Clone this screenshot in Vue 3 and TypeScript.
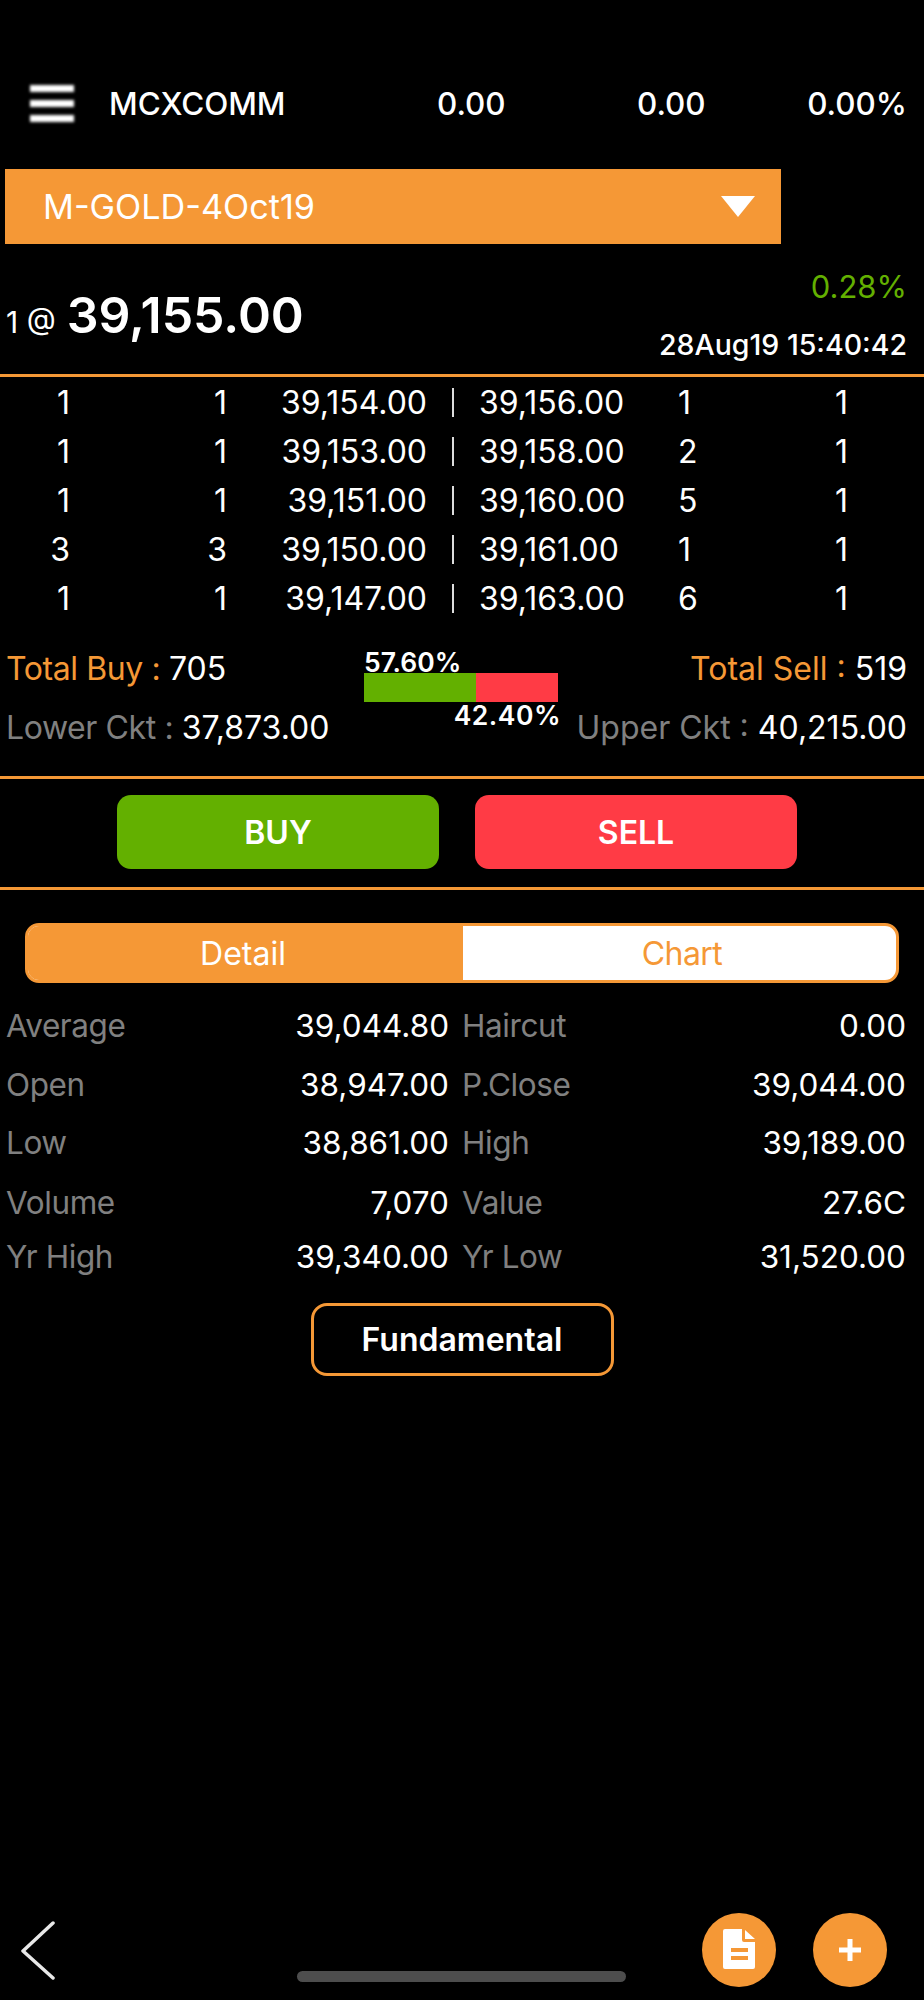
<script setup lang="ts">
type DepthRow = {
  buyOrders: string
  buyQty: string
  bid: string
  ask: string
  sellQty: string
  sellOrders: string
}

type DetailRow = {
  leftLabel: string
  leftValue: string
  rightLabel: string
  rightValue: string
}

const depthRows: DepthRow[] = [
  { buyOrders: '1', buyQty: '1', bid: '39,154.00', ask: '39,156.00', sellQty: '1', sellOrders: '1' },
  { buyOrders: '1', buyQty: '1', bid: '39,153.00', ask: '39,158.00', sellQty: '2', sellOrders: '1' },
  { buyOrders: '1', buyQty: '1', bid: '39,151.00', ask: '39,160.00', sellQty: '5', sellOrders: '1' },
  { buyOrders: '3', buyQty: '3', bid: '39,150.00', ask: '39,161.00', sellQty: '1', sellOrders: '1' },
  { buyOrders: '1', buyQty: '1', bid: '39,147.00', ask: '39,163.00', sellQty: '6', sellOrders: '1' },
]

const detailRows: DetailRow[] = [
  { leftLabel: 'Average', leftValue: '39,044.80', rightLabel: 'Haircut', rightValue: '0.00' },
  { leftLabel: 'Open', leftValue: '38,947.00', rightLabel: 'P.Close', rightValue: '39,044.00' },
  { leftLabel: 'Low', leftValue: '38,861.00', rightLabel: 'High', rightValue: '39,189.00' },
  { leftLabel: 'Volume', leftValue: '7,070', rightLabel: 'Value', rightValue: '27.6C' },
  { leftLabel: 'Yr High', leftValue: '39,340.00', rightLabel: 'Yr Low', rightValue: '31,520.00' },
]

const buyShare = 57.6
</script>

<template>
  <div class="screen">
    <header class="topbar">
      <div class="menu-icon"><span></span><span></span><span></span></div>
      <span class="topbar__name">MCXCOMM</span>
      <span class="topbar__change">0.00</span>
      <span class="topbar__net">0.00</span>
      <span class="topbar__pct">0.00%</span>
    </header>

    <div class="select">
      <span>M-GOLD-4Oct19</span>
      <i class="select__arrow"></i>
    </div>

    <section class="quote">
      <div class="quote__last">
        <span class="quote__qty">1 @</span>
        <span class="quote__price">39,155.00</span>
      </div>
      <div class="quote__side">
        <span class="quote__pct">0.28%</span>
        <span class="quote__time">28Aug19 15:40:42</span>
      </div>
    </section>

    <section class="depth">
      <div v-for="(row, i) in depthRows" :key="i" class="depth__row">
        <span class="depth__orders">{{ row.buyOrders }}</span>
        <span class="depth__qty">{{ row.buyQty }}</span>
        <span class="depth__bid">{{ row.bid }}</span>
        <span class="depth__sep"></span>
        <span class="depth__ask">{{ row.ask }}</span>
        <span class="depth__sell-qty">{{ row.sellQty }}</span>
        <span class="depth__sell-orders">{{ row.sellOrders }}</span>
      </div>
    </section>

    <section class="totals">
      <div class="totals__col">
        <div class="totals__line"><span class="orange tight">Total Buy : </span>705</div>
        <div class="totals__line totals__line--ckt"><span class="grey tight">Lower Ckt : </span>37,873.00</div>
      </div>
      <div class="ratio">
        <span class="ratio__buy">57.60%</span>
        <div class="ratio__bar">
          <div class="ratio__fill" :style="{ width: buyShare + '%' }"></div>
        </div>
        <span class="ratio__sell">42.40%</span>
      </div>
      <div class="totals__col totals__col--right">
        <div class="totals__line"><span class="orange">Total Sell : </span>519</div>
        <div class="totals__line totals__line--ckt"><span class="grey">Upper Ckt : </span>40,215.00</div>
      </div>
    </section>

    <section class="actions">
      <button type="button" class="actions__btn actions__btn--buy">BUY</button>
      <button type="button" class="actions__btn actions__btn--sell">SELL</button>
    </section>

    <div class="tabs">
      <div class="tabs__item tabs__item--active">Detail</div>
      <div class="tabs__item tabs__item--chart">Chart</div>
    </div>

    <section class="details">
      <div v-for="row in detailRows" :key="row.leftLabel" class="details__row">
        <span class="grey tight">{{ row.leftLabel }}</span>
        <span class="details__value">{{ row.leftValue }}</span>
        <span class="grey tight details__label2">{{ row.rightLabel }}</span>
        <span class="details__value">{{ row.rightValue }}</span>
      </div>
    </section>

    <button type="button" class="fundamental">Fundamental</button>

    <footer class="bottom">
      <svg class="bottom__back" width="36" height="60" viewBox="0 0 36 60">
        <path d="M33 3 L3 31 L33 58" fill="none" stroke="#e8e8e8" stroke-width="3.5" stroke-linecap="round" stroke-linejoin="round" />
      </svg>
      <button type="button" class="round round--doc">
        <svg width="32" height="40" viewBox="0 0 32 40">
          <path
            fill="#fff"
            fill-rule="evenodd"
            d="M2 0H19V11a2 2 0 0 0 2 2H32V38a2 2 0 0 1-2 2H2a2 2 0 0 1-2-2V2a2 2 0 0 1 2-2ZM22 1 32 10H22ZM8 19V23H25V19ZM8 27V31H25V27Z"
          />
        </svg>
      </button>
      <button type="button" class="round">
        <svg width="22" height="22" viewBox="0 0 22 22">
          <path fill="#fff" d="M8.5 0h5v8.5H22v5h-8.5V22h-5v-8.5H0v-5h8.5Z" />
        </svg>
      </button>
    </footer>
    <div class="home-bar"></div>
  </div>
</template>

<style scoped>
.screen {
  position: relative;
  width: 924px;
  height: 2000px;
  background: #000;
  color: #fff;
  font-family: Inter, "Liberation Sans", sans-serif;
  font-size: 32px;
  overflow: hidden;
}

.orange {
  color: #f59836;
}

.grey {
  color: #808080;
}

.tight {
  letter-spacing: -0.4px;
}

.topbar {
  height: 169px;
  position: relative;
  font-size: 31.4px;
  font-weight: 500;
}

.menu-icon {
  position: absolute;
  left: 30px;
  top: 85px;
  width: 44px;
  display: flex;
  flex-direction: column;
  gap: 8px;
  filter: blur(1.5px);
}

.menu-icon span {
  height: 7px;
  background: #fff;
}

.topbar__name,
.topbar__change,
.topbar__net,
.topbar__pct {
  position: absolute;
  top: 85px;
}

.topbar__name {
  left: 109px;
}

.topbar__change {
  left: 437px;
}

.topbar__net {
  left: 637px;
}

.topbar__pct {
  right: 17px;
}

.select {
  margin-left: 5px;
  width: 776px;
  height: 75px;
  padding: 0 26px 0 38px;
  box-sizing: border-box;
  background: #f59836;
  display: flex;
  align-items: center;
  justify-content: space-between;
  font-size: 34.2px;
}

.select__arrow {
  width: 0;
  height: 0;
  border-left: 17px solid transparent;
  border-right: 17px solid transparent;
  border-top: 21px solid #fff;
}

.quote {
  height: 130px;
  padding: 0 17px 0 6px;
  display: flex;
  justify-content: space-between;
  border-bottom: 3px solid #f59836;
}

.quote__last {
  margin-top: 41px;
  display: flex;
  align-items: baseline;
  gap: 11px;
}

.quote__qty {
  font-size: 30px;
}

.quote__price {
  font-size: 50px;
  font-weight: 600;
}

.quote__side {
  display: flex;
  flex-direction: column;
  align-items: flex-end;
}

.quote__pct {
  margin-top: 24px;
  font-size: 31px;
  color: #63b000;
}

.quote__time {
  margin-top: 22px;
  font-size: 28.5px;
  font-weight: 500;
}

.depth {
  padding-top: 1px;
}

.depth__row {
  height: 49px;
  display: flex;
  align-items: center;
}

.depth__orders {
  width: 70px;
  text-align: right;
}

.depth__qty {
  width: 157px;
  text-align: right;
}

.depth__bid {
  width: 200px;
  text-align: right;
}

.depth__sep {
  width: 2px;
  height: 29px;
  margin: 0 25px;
  background: #ddd;
}

.depth__ask {
  width: 199px;
}

.depth__sell-qty {
  width: 157px;
}

.totals {
  margin-top: 21px;
  height: 132px;
  padding: 0 17px 0 6px;
  display: flex;
  justify-content: space-between;
  border-bottom: 3px solid #f59836;
}

.totals__col {
  display: flex;
  flex-direction: column;
  width: 340px;
}

.totals__col--right {
  align-items: flex-end;
}

.totals__line {
  margin-top: 5px;
  white-space: pre;
}

.totals__line--ckt {
  margin-top: 20px;
}

.ratio {
  position: relative;
  align-self: flex-start;
  margin-top: 29px;
  width: 194px;
  height: 29px;
  margin-left: 18px;
  margin-right: auto;
}

.ratio__bar {
  height: 100%;
  background: #ff3b45;
}

.ratio__fill {
  height: 100%;
  background: #63b000;
}

.ratio__buy,
.ratio__sell {
  position: absolute;
  font-size: 26.5px;
  font-weight: 600;
  line-height: 1;
}

.ratio__buy {
  left: 0;
  top: -24px;
}

.ratio__sell {
  right: -3px;
  top: 29px;
  letter-spacing: 0.5px;
}

.actions {
  height: 111px;
  padding-top: 16px;
  padding-left: 117px;
  box-sizing: border-box;
  display: flex;
  gap: 36px;
  border-bottom: 3px solid #f59836;
}

.actions__btn {
  width: 322px;
  height: 74px;
  border: 0;
  border-radius: 14px;
  color: #fff;
  font: inherit;
  font-weight: 600;
}

.actions__btn--buy {
  background: #63b000;
}

.actions__btn--sell {
  background: #ff3b45;
}

.tabs {
  margin: 33px 25px 0;
  height: 60px;
  box-sizing: border-box;
  display: flex;
  border: 3px solid #f59836;
  border-radius: 14px;
  background: #fff;
  overflow: hidden;
}

.tabs__item {
  flex: 1;
  display: flex;
  align-items: center;
  justify-content: center;
  color: #f59836;
}

.tabs__item--active {
  flex: 0 0 435px;
  padding-right: 5px;
  box-sizing: border-box;
  background: #f59836;
  color: #fff;
}

.tabs__item--chart {
  padding-left: 5px;
  letter-spacing: -0.6px;
}

.details {
  padding: 12px 18px 0 6px;
  display: grid;
  grid-template-rows: 60px 58px 58px 62px 46px;
  font-size: 31.5px;
}

.details__row {
  display: grid;
  grid-template-columns: 200px 243px 200px 257px;
  align-items: center;
}

.details__value {
  text-align: right;
}

.details__label2 {
  padding-left: 13px;
}

.fundamental {
  display: block;
  margin: 24px auto 0;
  width: 303px;
  height: 73px;
  background: transparent;
  border: 3px solid #f59836;
  border-radius: 16px;
  color: #fff;
  font: inherit;
  font-weight: 600;
}

.bottom {
  position: absolute;
  left: 0;
  right: 0;
  bottom: 13px;
  height: 74px;
  display: flex;
  align-items: center;
  padding-right: 37px;
  gap: 37px;
}

.bottom__back {
  margin: 0 auto 0 20px;
}

.round {
  width: 74px;
  height: 74px;
  padding: 0;
  border: 0;
  border-radius: 50%;
  background: #f59836;
  display: flex;
  align-items: center;
  justify-content: center;
}

.round--doc svg {
  margin-top: -2px;
  filter: blur(0.5px);
}

.home-bar {
  position: absolute;
  left: 297px;
  top: 1971px;
  width: 329px;
  height: 11px;
  border-radius: 6px;
  background: #4d4d4d;
}
</style>

<style>
html,
body {
  background: #000;
}
</style>
